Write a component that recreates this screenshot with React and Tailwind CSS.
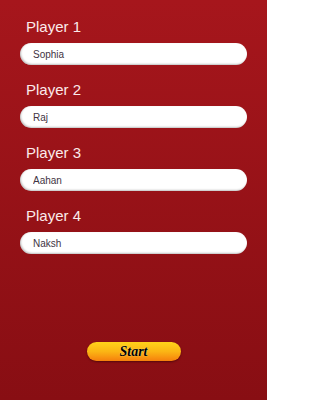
import React from 'react';

// Player setup screen: four name fields and a start button.
const PLAYERS = ['Sophia', 'Raj', 'Aahan', 'Naksh'];

export default function App() {
  return (
    <div
      className="w-[267px] h-[400px] overflow-hidden bg-gradient-to-b from-[#a6161c] to-[#880e13] px-[20px] pt-[18px] flex flex-col"
      style={{ fontFamily: '"Liberation Sans", Arial, sans-serif' }}
    >
      {PLAYERS.map((name, i) => (
        <div key={name} className="mb-[16px]">
          <div className="ml-[6px] text-[15px] leading-[18px] text-[#fbeaea]">Player {i + 1}</div>
          <input
            readOnly
            defaultValue={name}
            className="mt-[7px] block w-[227px] h-[22px] rounded-full bg-white pl-[13px] text-[10px] text-[#3f3444] outline-none shadow-[inset_1px_-1px_2px_rgba(0,0,0,0.25)]"
          />
        </div>
      ))}
      <div className="mt-[72px] flex justify-center">
        <button
          className="w-[94px] h-[19px] rounded-full bg-gradient-to-b from-[#ffd21a] via-[#fbb514] to-[#f57f0c] shadow-[0_1px_2px_rgba(0,0,0,0.4)] flex items-center justify-center"
        >
          <span
            className="text-[14px] font-bold italic text-black leading-none [text-shadow:0_0_1px_#fff3b0]"
            style={{ fontFamily: '"Liberation Serif", "Times New Roman", serif' }}
          >
            Start
          </span>
        </button>
      </div>
    </div>
  );
}
